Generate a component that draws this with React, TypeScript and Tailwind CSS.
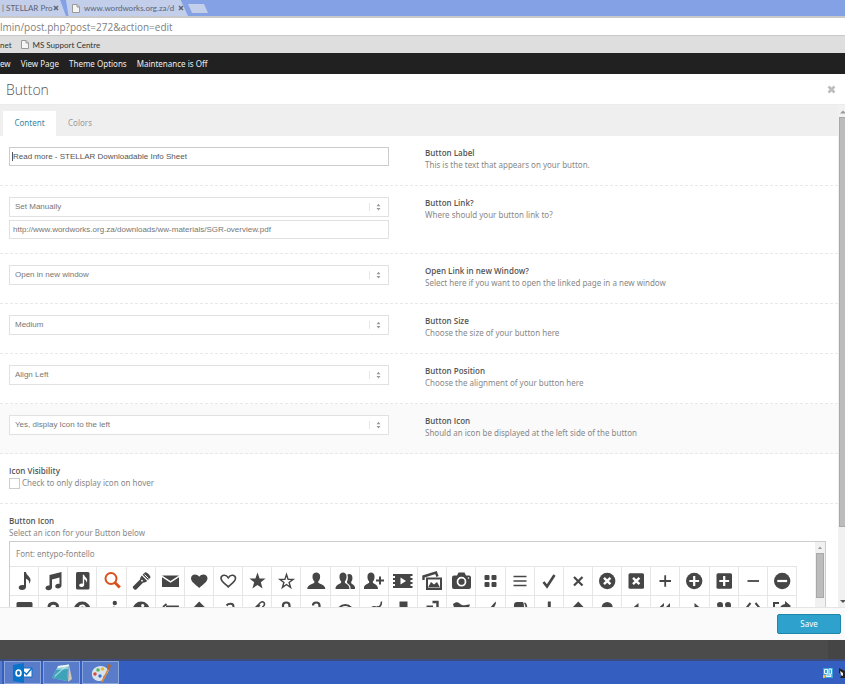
import React from "react";

const bodyFont = "font-['Noto_Sans','Open_Sans',sans-serif]";
const headingFont = "font-['Open_Sans','Noto_Sans',sans-serif]";
const chromeFont = "font-[Lato,'Open_Sans',sans-serif]";
const arial = "font-['Liberation_Sans',Arial,sans-serif]";

/* Icon-font glyphs, drawn on a 20 x 20 grid */
const Note = () => (
  <path d="M10 1h2c0 3 4.500 4.500 4.500 8 0 1.500-.5 2.700-1.300 3.700.3-2.700-1-4.200-3.200-4.900v8.200c0 1.700-1.800 3-4 3s-3.300-1-3.300-2.400S6.300 14 8.300 14c.7 0 1.200.1 1.700.300z" />
);
const stroke = (width: number) => ({ fill: "none", stroke: "currentColor", strokeWidth: width });

const firstRow: [string, React.ReactNode][] = [
  ["note", <Note />],
  ["note-beamed", <path d="M6.500 4l12-3v13.500c0 1.600-1.600 2.900-3.400 2.900s-2.900-.9-2.900-2.200 1.300-2.400 3-2.400c.5 0 1 .1 1.300.2V6.600L9 8.500v7.900C9 18 7.300 19.200 5.500 19.200S2.500 18.300 2.500 17s1.300-2.400 3-2.400h1z" />],
  ["music", <><rect x="4" y="1" width="13.500" height="17.500" rx="1.500" /><g className="text-white" fill="currentColor" transform="translate(4 3) scale(.68)"><Note /></g></>],
  ["search", <g {...stroke(2)}><circle cx="9" cy="7.500" r="5.500" /><path d="M12.800 11.500l5 5" strokeWidth="3" /></g>],
  ["flashlight", <><path d="M2 15.500l7-7c.3-1.600.7-2.800 1.800-4l5.400 5.400c-1.200 1.100-2.500 1.500-4.200 1.800l-7 7c-1.200.9-3.900-2-3-3.200z" /><path d="M11.600 3.700L14 1.500c1.500-1 6.300 3.800 5.300 5.300L17 9.100z" /><path d="M13.500 3.500l4 4" {...stroke(1)} className="text-white" /><circle cx="11" cy="9.700" r=".9" className="text-white" fill="currentColor" /></>],
  ["mail", <><path d="M2 4.500h17L10.500 10z" /><path d="M2 6.300l8.500 5.400L19 6.300V16H2z" /></>],
  ["heart", <path d="M10.200 17C7 14 2 11 2 7.300c0-4.200 5.700-5.300 8.200-1.500 2.500-3.800 8.300-2.700 8.300 1.500 0 3.700-5.100 6.700-8.300 9.700z" />],
  ["heart-empty", <path d="M10.300 15.800C7.400 13 3 10.600 3 7.300c0-3.400 5-4.400 7.300-.5 2.300-3.900 7.200-2.900 7.200.5 0 3.300-4.300 5.700-7.200 8.500z" {...stroke(1.6)} />],
  ["star", <path d="M10.500 1.500l2.100 6h6l-4.800 3.800 1.800 6.200-5.100-3.600-5.100 3.600 1.800-6.200-4.800-3.800h6z" />],
  ["star-empty", <path d="M10.500 3.500l1.600 4.900h5l-4 3.100 1.500 4.900-4.100-2.900-4.100 2.900 1.500-4.900-4-3.100h5z" {...stroke(1.400)} />],
  ["user", <path d="M6.500 5c0-4.800 7.600-4.800 7.600 0 .1 2.500-.4 4-1.800 5.300v1.500c1.700 1.400 7 2 7 6.200h-18c0-4.200 5.300-4.800 7-6.200v-1.500C6.900 9 6.400 7.500 6.500 5z" />],
  ["users", <><path d="M4.500 5c0-4.800 7-4.800 7 0 .1 2.500-.3 4-1.600 5.300v1.500c1.500 1.400 4.600 2 4.600 6.200H.5c0-4.200 4.100-4.800 5.600-6.200v-1.500C4.800 9 4.400 7.500 4.500 5z" /><path d="M12.300 3.600c2-1.400 5.200-.3 5.100 2.900.1 2-.2 3.200-1.200 4.300v1.400c1.400 1 4 1.800 4 5.800h-4.500c0-3.300-1.800-4.800-3.700-6V10.500c1-1.800 1.200-4.700.3-6.900z" /></>],
  ["user-add", <><path d="M3.500 5c0-4.800 7-4.800 7 0 .1 2.500-.3 4-1.600 5.300v1.500c1.500 1.400 5.100 2 5.100 6.200H-.5c0-4.200 4.100-4.800 5.600-6.200v-1.500C3.800 9 3.400 7.500 3.500 5z" /><path d="M16 5.500v8M12 9.500h8" {...stroke(2)} /></>],
  ["video", <><path d="M0 3h19.500v2h-2v2h2v2h-2v2h2v2h-2v2h2v2H0v-2h2v-2H0v-2h2V9H0V7h2V5H0z" /><path d="M7.500 6.500v7l5.500-3.500z" className="text-white" fill="currentColor" /></>],
  ["picture", <><path d="M1.500 9V5.500L14 1.500l1.500 4" {...stroke(2.400)} /><rect x="5" y="7.500" width="14" height="10.500" {...stroke(2)} /><path d="M6 16.500l3-5.500 3 2.500 3-2.500 3 5.500z" /></>],
  ["camera", <><path d="M3 4.500h3l1.500-3h6l1.500 3h3q2 0 2 2V16q0 2-2 2H3q-2 0-2-2V6.500q0-2 2-2z" /><circle cx="10.500" cy="10.700" r="4" {...stroke(1.700)} className="text-white" /><circle cx="17.500" cy="7" r=".8" className="text-white" fill="currentColor" /></>],
  ["layout", <><rect x="4.500" y="4" width="5" height="5" rx="1" /><rect x="11.500" y="4" width="5" height="5" rx="1" /><rect x="4.500" y="11" width="5" height="5" rx="1" /><rect x="11.500" y="11" width="5" height="5" rx="1" /></>],
  ["menu", <path d="M3.500 5.500h13M3.500 10h13M3.500 14.500h13" {...stroke(1.700)} />],
  ["check", <path d="M4.500 11l3.500 4.500L15.500 4" {...stroke(2.600)} />],
  ["cancel", <path d="M6 6l8.500 8.500M14.500 6L6 14.500" {...stroke(2.200)} />],
  ["cancel-circled", <><circle cx="10.200" cy="10" r="8.200" /><path d="M7 6.800l6.400 6.400M13.400 6.800L7 13.200" {...stroke(2.400)} className="text-white" /></>],
  ["cancel-squared", <><rect x="2.500" y="2.300" width="15.500" height="15.500" rx="1.500" /><path d="M7 6.800l6.400 6.400M13.400 6.800L7 13.200" {...stroke(2.400)} className="text-white" /></>],
  ["plus", <path d="M4.500 10h11.500M10.200 4.300v11.500" {...stroke(1.800)} />],
  ["plus-circled", <><circle cx="10.200" cy="10" r="8.200" /><path d="M5.300 10h9.800M10.200 5.100v9.800" {...stroke(2.200)} className="text-white" /></>],
  ["plus-squared", <><rect x="2.500" y="2.300" width="15.500" height="15.500" rx="1.500" /><path d="M5.300 10h9.800M10.200 5.100v9.800" {...stroke(2.200)} className="text-white" /></>],
  ["minus", <path d="M4.500 10h11.500" {...stroke(1.800)} />],
  ["minus-circled", <><circle cx="10.200" cy="10" r="8.200" /><path d="M5.300 10h9.800" {...stroke(2.200)} className="text-white" /></>],
];

const secondRow: [string, React.ReactNode][] = [
  ["minus-squared", <rect x="2.500" y="2" width="16" height="16" rx="1.500" />],
  ["help", <path d="M6 7C6 2 14.500 2 14.500 6.300c0 3-4.200 3.200-4.200 6.700M10.300 15v2.500" {...stroke(3)} />],
  ["help-circled", <><circle cx="10.200" cy="10" r="8.500" /><path d="M7.500 8c.3-3.500 5.400-3.200 5.200-.5-.2 2-2.400 2-2.400 4.500v2" {...stroke(2)} className="text-white" /></>],
  ["info", <><circle cx="12.800" cy="3" r="2.200" /><path d="M8 9l3-1-1.500 8 2.500-1" {...stroke(2.200)} /></>],
  ["info-circled", <><circle cx="10.200" cy="10" r="8.500" /><circle cx="11.700" cy="5.500" r="1.600" className="text-white" fill="currentColor" /><path d="M10.500 9v6" {...stroke(2)} className="text-white" /></>],
  ["back", <path d="M6 6.300H18v7H4M6.500 4L3 7" {...stroke(1.800)} />],
  ["home", <path d="M10.200 1.500l8.500 8.500h-3V17H5v-7H2z" />],
  ["link", <path d="M8.500 5.500c2-2.300 7-2.500 7 1s-4 2.500-5 5.500-6 3-6-.5" {...stroke(2)} />],
  ["attach", <path d="M6 10l7.500-7.500c2.500-1.800 5 .5 3.500 3L9 15c-2 1.500-5-.5-3-3l7-7" {...stroke(1.500)} />],
  ["lock", <><path d="M7 9V5.500c0-4 6.500-4 6.500 0V9" {...stroke(2.200)} /><rect x="5" y="9" width="11" height="8" /></>],
  ["lock-open", <><path d="M7 5.500c0-4 6.500-4 6.500 0V9" {...stroke(2.200)} /><rect x="5" y="9" width="11" height="8" /></>],
  ["eye", <><path d="M3 9.500c3.500-6 11-6 14.500 0-3.500 6-11 6-14.500 0z" {...stroke(2)} /><circle cx="10.300" cy="10" r="2.500" /></>],
  ["tag", <path d="M17.500 1.500c0 6-4 6.500-6 5.500-4-1.500-7 4-7.500 9 5-1 9-5 10-10" {...stroke(1.500)} />],
  ["bookmark", <path d="M6.500 1.500h8V18l-4-4-4 4z" />],
  ["bookmarks", <><path d="M10.500 2h5v14l-3-3" {...stroke(2.400)} /><path d="M4.500 5.500H11V18l-3.200-3-3.300 3z" /></>],
  ["flag", <path d="M2 4c5-4 6 0 9 1s4-1 8-.5l-3 8.500c-5 2-7-2-11 1z" />],
  ["thumbs-up", <path d="M16 1.500c0 5-3 5.500-3 8.500h4v7H5v-6c4 0 6-5.500 11-9.500z" />],
  ["thumbs-down", <><path d="M4 5q0-3 3-3h6q1 1 1 5l-2 8-3 3-1-6-4-2z" /><path d="M14.500 3q2 1 2 6" {...stroke(1.800)} /></>],
  ["download", <path d="M8.800 1.500h3V8H16l-5.700 6.500L4.500 8h4.300z" />],
  ["upload", <path d="M10.300 1.500L16 7.500h-4v7H8.500v-7h-4z" />],
  ["upload-cloud", <><circle cx="10.200" cy="7.500" r="5.500" /><circle cx="5" cy="11" r="4" /><circle cx="15" cy="11" r="4" /></>],
  ["reply", <path d="M12.500 3v4c4 0 6 4 6 8-2-3-4-3-6-3v3L6 8.500z" />],
  ["reply-all", <path d="M9 3v3L5.500 9 9 12v3L2.500 9zM15 3v4c4 0 4 4 4 8-1-3-2-3-4-3v3L9 9z" />],
  ["forward", <path d="M10.500 3v4c-5 0-7 4-7 8 2-3 4-3 7-3v3L17 8.500z" />],
  ["quote", <><path d="M3 4.500Q3 2 6 2t3 3q0 7-6 9l2-6q-2-1-2-3.500z" /><path d="M11 4.500Q11 2 14 2t3 3q0 7-6 9l2-6q-2-1-2-3.500z" /></>],
  ["code", <path d="M7.500 3L3 8.500 7.500 14M12.500 3L17 8.500 12.500 14" {...stroke(2)} />],
  ["export", <><path d="M7 3H2v14h13v-4" {...stroke(2)} /><path d="M13 1l6 5-6 5V8q-4 0-6 4 0-7 6-8z" /></>],
];

function IconCell({ name, children, picked }: { name: string; children: React.ReactNode; picked?: boolean }) {
  return (
    <button
      type="button"
      title={name}
      aria-label={name}
      className={`flex h-[29px] items-center justify-center border-r border-b border-[#e6e6e6] bg-white ${picked ? "text-[#d9501e]" : "text-[#464646]"}`}
    >
      <svg viewBox="0 0 20 20" className="size-5 shrink-0" fill="currentColor" aria-hidden="true">
        {children}
      </svg>
    </button>
  );
}

function PageIcon() {
  return (
    <svg viewBox="0 0 8 9" className="h-[9px] w-2 shrink-0" aria-hidden="true">
      <path d="M.5.5h4.500l2.500 2.500v5.500h-7z" fill="#f5f5f5" stroke="#9a9a9a" />
      <path d="M5 .5v2.500h2.500" fill="none" stroke="#9a9a9a" />
    </svg>
  );
}

function CrossIcon() {
  return (
    <svg viewBox="0 0 6 6" className="size-[6px] shrink-0" aria-hidden="true">
      <path d="M1 1l4 4M5 1L1 5" stroke="currentColor" strokeWidth="1.500" />
    </svg>
  );
}

function SelectBox({ id, value }: { id: string; value: string }) {
  return (
    <div className="relative">
      <select
        id={id}
        defaultValue={value}
        className={`${arial} block h-5 w-full appearance-none rounded-none border border-[#e1e1e1] bg-white pl-[5px] text-[8px] leading-[12px] text-[#777] outline-none`}
      >
        <option>{value}</option>
      </select>
      <svg viewBox="0 0 16 10" className="pointer-events-none absolute top-[5px] right-1 h-[10px] w-4" aria-hidden="true">
        <path d="M.5 1v8" stroke="#e6e6e6" />
        <path d="M7.500 4.300l2-2.600 2 2.600zM7.500 6l2 2.600 2-2.600z" fill="#999" />
      </svg>
    </div>
  );
}

function Field({ id, title, help, shaded, children }: { id: string; title: string; help: string; shaded?: boolean; children: React.ReactNode }) {
  return (
    <div className={`grid grid-cols-2 gap-9 border-b border-dashed border-[#e8e8e8] pt-[11px] pr-[33px] pb-[14px] pl-[9px] ${shaded ? "bg-[#fafafa]" : ""}`}>
      <div>{children}</div>
      <div className="text-[8px] leading-[12px] text-[#888]">
        <label htmlFor={id} className={`${headingFont} block font-semibold text-[#555]`}>{title}</label>
        <p>{help}</p>
      </div>
    </div>
  );
}

function Browser() {
  return (
    <header className="shrink-0">
      <div className={`${chromeFont} flex h-[18px] items-start border-b-2 border-[#c9c9c9] bg-[#84a1e6] text-[8px] text-[#5d6575]`}>
        <button type="button" className="flex h-4 w-[66px] items-center justify-between bg-[#c2ceea] pr-[7px] pl-[2px] whitespace-nowrap [clip-path:polygon(0_0,91%_0,100%_100%,0_100%)]">
          | STELLAR Pro
          <CrossIcon />
        </button>
        <button type="button" className="flex h-4 w-[122px] items-center gap-1 bg-[#c2ceea] pl-[6px] whitespace-nowrap [clip-path:polygon(0_0,94%_0,100%_100%,2%_100%)]">
          <PageIcon />
          www.wordworks.org.za/d
          <span className="mr-[8px] ml-auto"><CrossIcon /></span>
        </button>
        <button type="button" aria-label="New tab" className="mt-1 h-[9px] w-5 bg-[#c2ceea] [clip-path:polygon(0_0,80%_0,100%_100%,20%_100%)]" />
      </div>
      <div className="flex h-[17px] items-center bg-white">
        <input
          aria-label="Address"
          defaultValue="lmin/post.php?post=272&action=edit"
          className={`${headingFont} w-full bg-transparent text-[10px] leading-[16px] text-[#808080] outline-none`}
        />
      </div>
      <div className={`${chromeFont} flex h-[18px] items-center gap-[9px] border-t border-[#c8c8c8] bg-[#dedede] text-[8px] text-[#333]`}>
        <a href="#net">net</a>
        <a href="#support" className="flex items-center gap-1">
          <PageIcon />
          MS Support Centre
        </a>
      </div>
      <nav className="flex h-[21px] items-center gap-[10px] bg-[#212121] text-[8px] text-[#eee]">
        <a href="#new">ew</a>
        <a href="#view">View Page</a>
        <a href="#options">Theme Options</a>
        <a href="#maintenance">Maintenance is Off</a>
      </nav>
    </header>
  );
}

function Taskbar() {
  const button = "flex h-full w-[37px] items-center justify-center border border-[#8ca5da] bg-[#587bca]";
  return (
    <footer className="flex h-[25px] shrink-0 items-stretch gap-[2px] border-t-2 border-[#3c4c7d] bg-[#345fc0]">
      <div className="w-[2px] bg-[#587bca]" />
      <button type="button" aria-label="Outlook" className={button}>
        <svg viewBox="0 0 20 20" className="size-5" aria-hidden="true">
          <path d="M9 5h10v9H9z" fill="#fff" stroke="#0a73c8" />
          <path d="M11 9l2.500 2.500L19 5" fill="none" stroke="#0a73c8" strokeWidth="1.500" />
          <path d="M0 2l11-2v20L0 18z" fill="#0873c8" />
          <ellipse cx="5.500" cy="10" rx="2.400" ry="3" fill="none" stroke="#fff" strokeWidth="1.700" />
        </svg>
      </button>
      <button type="button" aria-label="Notepad" className={button}>
        <svg viewBox="0 0 20 20" className="size-5" aria-hidden="true">
          <path d="M17 2l3 14-4 3z" fill="#cfc9b4" />
          <path d="M6 3l11-1.500L15 18 0 15z" fill="#8fd0df" />
          <path d="M4 7l12-1-1 12L0 15z" fill="#3ea2b8" />
          <path d="M6 3l11-1.500v1.800L5.500 5z" fill="#eef6f7" />
          <path d="M3 12L12 4h2L2 15z" fill="#c8ecf2" opacity=".6" />
        </svg>
      </button>
      <button type="button" aria-label="Paint" className={button}>
        <svg viewBox="0 0 20 20" className="size-5" aria-hidden="true">
          <path d="M1 12C0 5 8 1 14 4c6 3 3 7 0 8s-1 6-5 6-7.500-2-8-6z" fill="#d7e2ec" />
          <circle cx="7" cy="7" r="1.800" fill="#59b553" />
          <circle cx="11.500" cy="6" r="1.800" fill="#e8b932" />
          <circle cx="4" cy="11" r="1.700" fill="#d34b37" />
          <circle cx="9" cy="13" r="1.700" fill="#3e6fd0" />
          <path d="M10 19l7-14 1.500 1L12 19z" fill="#d88b3d" />
          <path d="M16 1l4 1-1.500 5-2.500-1z" fill="#b46a2e" />
        </svg>
      </button>
      <div className="ml-auto flex items-center gap-[6px]">
        <svg viewBox="0 0 10 10" className="size-[10px]" aria-hidden="true">
          <path d="M0 0h10v10H0z" fill="#3ba3dc" />
          <path d="M1.500 1.500h3v4h-3zM6 1h2.500v5H6zM3 7h5v1.500H3z" fill="none" stroke="#e8f6ff" />
          <path d="M0 7h2v3H0z" fill="#e4c34c" />
        </svg>
        <svg viewBox="0 0 6 10" className="h-[10px] w-[6px]" aria-hidden="true">
          <path d="M0 0l6 3v7H1l2-3-3-2z" fill="#222" />
          <path d="M1 3l3 2v3l-2-1z" fill="#eee" />
        </svg>
      </div>
    </footer>
  );
}

export default function App() {
  return (
    <div className={`${bodyFont} flex h-screen flex-col overflow-hidden bg-white`}>
      <Browser />

      <div className="flex h-[31px] shrink-0 items-center justify-between border-b border-[#ececec] pr-[9px] pl-[6px]">
        <h1 className={`${headingFont} text-[14px] font-light text-[#555]`}>Button</h1>
        <button type="button" aria-label="Close" className="text-[#bdbdbd]">
          <svg viewBox="0 0 9 9" className="size-[9px]" aria-hidden="true">
            <path d="M1.500 1.500l6 6M7.500 1.500l-6 6" stroke="currentColor" strokeWidth="2.600" />
          </svg>
        </button>
      </div>

      <main className="flex min-h-0 flex-1">
        <div className="min-w-0 flex-1 overflow-hidden">
          <div role="tablist" className="flex h-[31px] items-end bg-[#efefef] pl-[3px] text-[8px]">
            <button type="button" role="tab" aria-selected="true" className="h-[25px] w-[53px] bg-white pb-[2px] text-[#3687a8]">Content</button>
            <button type="button" role="tab" aria-selected="false" className="h-[25px] w-12 pb-[2px] text-[#999]">Colors</button>
          </div>

          <form>
            <Field id="label" title="Button Label" help="This is the text that appears on your button.">
              <div className="relative">
                <input id="label" defaultValue="Read more - STELLAR Downloadable Info Sheet" className={`${arial} block h-[19px] w-full border border-[#ccc] px-[3px] text-[8px] text-[#555] outline-none`} />
                <span className="absolute top-[5px] left-[3px] h-[9px] w-px bg-[#555]" />
              </div>
            </Field>
            <Field id="link" title="Button Link?" help="Where should your button link to?">
              <SelectBox id="link" value="Set Manually" />
              <input aria-label="Link address" defaultValue="http://www.wordworks.org.za/downloads/ww-materials/SGR-overview.pdf" className={`${arial} mt-[3px] block h-[19px] w-full border border-[#e1e1e1] px-[3px] text-[8px] text-[#777] outline-none`} />
            </Field>
            <Field id="target" title="Open Link in new Window?" help="Select here if you want to open the linked page in a new window">
              <SelectBox id="target" value="Open in new window" />
            </Field>
            <Field id="size" title="Button Size" help="Choose the size of your button here">
              <SelectBox id="size" value="Medium" />
            </Field>
            <Field id="position" title="Button Position" help="Choose the alignment of your button here">
              <SelectBox id="position" value="Align Left" />
            </Field>
            <Field id="icon" title="Button Icon" help="Should an icon be displayed at the left side of the button" shaded>
              <SelectBox id="icon" value="Yes, display Icon to the left" />
            </Field>

            <div className="border-b border-dashed border-[#e8e8e8] pt-[11px] pb-[14px] pl-[9px] text-[8px] leading-[12px] text-[#888]">
              <p className={`${headingFont} font-semibold text-[#555]`}>Icon Visibility</p>
              <label className="flex items-center gap-[2px]">
                <input type="checkbox" className="size-[11px] appearance-none border border-[#ccc] bg-white" />
                Check to only display icon on hover
              </label>
            </div>

            <section className="pt-[11px] pr-3 pl-[9px] text-[8px] leading-[12px] text-[#888]">
              <h2 className={`${headingFont} font-semibold text-[#555]`}>Button Icon</h2>
              <p>Select an icon for your Button below</p>
              <div className="mt-[2px] flex h-52 border border-[#ccc]">
                <div className="min-w-0 flex-1 pr-[18px]">
                  <p className="border-b border-[#e6e6e6] py-[6px] pl-[6px]">Font: entypo-fontello</p>
                  <div className="grid grid-cols-[repeat(27,minmax(0,1fr))]">
                    {firstRow.map(([name, glyph]) => (
                      <IconCell key={name} name={name} picked={name === "search"}>{glyph}</IconCell>
                    ))}
                    {secondRow.map(([name, glyph]) => (
                      <IconCell key={name} name={name}>{glyph}</IconCell>
                    ))}
                  </div>
                </div>
                <div className="flex w-[10px] flex-col items-center bg-[#f1f1f1]">
                  <svg viewBox="0 0 10 11" className="h-[11px] w-[10px]" aria-hidden="true">
                    <path d="M3 7l2-2.500L7 7z" fill="#999" />
                  </svg>
                  <div className="h-[45px] w-2 border border-[#a8a8a8] bg-[#bcbcbc]" />
                </div>
              </div>
            </section>
          </form>
        </div>

        <div className="flex w-[7px] shrink-0 flex-col bg-[#f1f1f1]">
          <svg viewBox="0 0 7 12" className="h-3 w-[7px]" aria-hidden="true">
            <path d="M2 8.500l3-3 3 3z" fill="#999" />
          </svg>
          <div className="ml-px h-[410px] border border-r-0 border-[#a8a8a8] bg-[#bcbcbc]" />
          <svg viewBox="0 0 7 12" className="mt-auto h-3 w-[7px]" aria-hidden="true">
            <path d="M2 5l3 3 3-3z" fill="#555" />
          </svg>
        </div>
      </main>

      <div className="flex h-[33px] shrink-0 items-center justify-end border-t border-[#e5e5e5] bg-[#fafafa] pr-1">
        <button type="button" className="h-5 w-16 rounded-[2px] border border-[#1f86ab] bg-[#2ea2cc] text-[8px] text-white">Save</button>
      </div>
      <div className="flex h-[19px] shrink-0 justify-end bg-[#4b4b4b]">
        <div className="w-[17px] bg-[#454545]" />
      </div>
      <Taskbar />
    </div>
  );
}
